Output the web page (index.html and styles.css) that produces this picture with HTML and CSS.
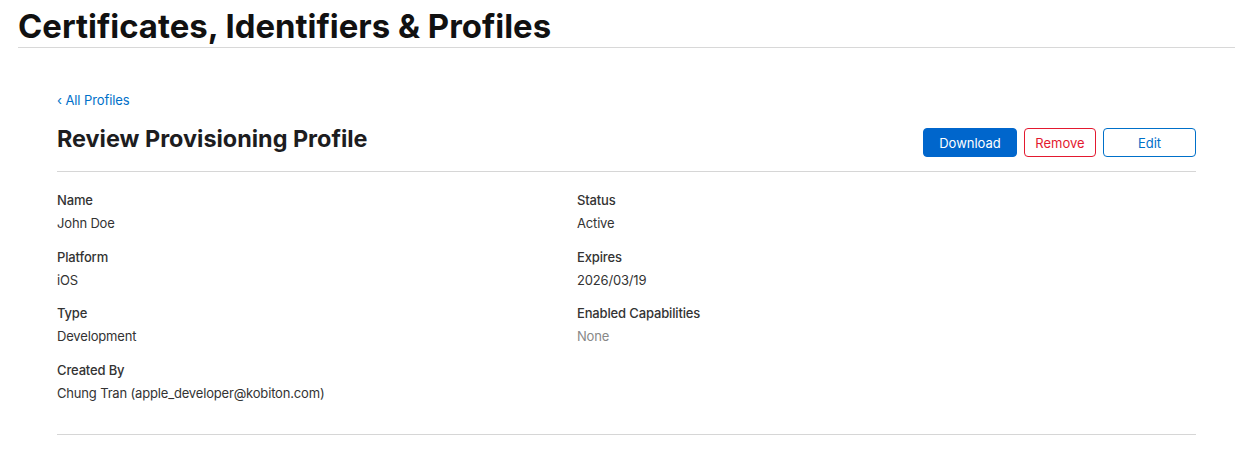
FILE: index.html
```html
<!DOCTYPE html>
<html lang="en">
<head>
<meta charset="utf-8">
<title>Certificates, Identifiers &amp; Profiles</title>
<link rel="stylesheet" href="styles.css">
</head>
<body>
<header class="site-header">
  <h1 class="site-title">Certificates, Identifiers &amp; Profiles</h1>
</header>
<main class="content">
  <a class="back-link" href="#">&#8249; All Profiles</a>
  <div class="page-head">
    <h2 class="page-title">Review Provisioning Profile</h2>
    <div class="actions">
      <button class="btn btn-primary">Download</button>
      <button class="btn btn-danger">Remove</button>
      <button class="btn btn-outline">Edit</button>
    </div>
  </div>
  <section class="details">
    <div class="col">
      <div class="field"><div class="label">Name</div><div class="value">John Doe</div></div>
      <div class="field"><div class="label">Platform</div><div class="value">iOS</div></div>
      <div class="field"><div class="label">Type</div><div class="value">Development</div></div>
      <div class="field"><div class="label">Created By</div><div class="value">Chung Tran (apple_developer@kobiton.com)</div></div>
    </div>
    <div class="col">
      <div class="field"><div class="label">Status</div><div class="value">Active</div></div>
      <div class="field"><div class="label">Expires</div><div class="value">2026/03/19</div></div>
      <div class="field"><div class="label">Enabled Capabilities</div><div class="value muted">None</div></div>
    </div>
  </section>
</main>
</body>
</html>
```

FILE: styles.css
```css
* { box-sizing: border-box; }
body {
  margin: 0;
  font-family: Inter, "Liberation Sans", sans-serif;
  color: #1d1d1f;
  background: #fff;
}
.site-header {
  margin-left: 18px;
  border-bottom: 1px solid #d8d8d8;
  height: 48px;
  padding-top: 6px;
}
.site-title {
  margin: 0;
  font-size: 32.9px;
  font-weight: 700;
  line-height: 40px;
  color: #111;
}
.content {
  width: 1139px;
  margin-left: 57px;
  padding-top: 43px;
}
.back-link {
  display: block;
  font-size: 13px;
  line-height: 18px;
  color: #0070c9;
  text-decoration: none;
  letter-spacing: -0.1px;
}
.page-head {
  display: flex;
  justify-content: space-between;
  align-items: flex-start;
  margin-top: 19px;
  padding-bottom: 14px;
  border-bottom: 1px solid #d6d6d6;
}
.page-title {
  margin: 0;
  font-size: 23.4px;
  font-weight: 700;
  line-height: 22px;
  color: #1d1d1f;
}
.actions {
  display: flex;
  gap: 7px;
}
.btn {
  height: 29px;
  border-radius: 4px;
  font-family: inherit;
  font-size: 13px;
  background: #fff;
  padding: 0;
  cursor: pointer;
}
.btn-primary {
  width: 94px;
  background: #0066cc;
  border: 1px solid #0066cc;
  color: #fff;
}
.btn-danger {
  width: 72px;
  border: 1px solid #e3192f;
  color: #e3192f;
}
.btn-outline {
  width: 93px;
  border: 1px solid #0070c9;
  color: #0070c9;
}
.details {
  display: grid;
  grid-template-columns: 520px 1fr;
  padding-top: 19px;
  padding-bottom: 32px;
  border-bottom: 1px solid #d6d6d6;
}
.field {
  display: flex;
  flex-direction: column;
  gap: 5px;
  margin-bottom: 15.6px;
}
.col .field:last-child { margin-bottom: 0; }
.label {
  font-size: 13px;
  font-weight: 500;
  line-height: 18px;
  color: #333;
  letter-spacing: -0.15px;
}
.value {
  font-size: 13px;
  line-height: 18px;
  color: #333;
  letter-spacing: -0.17px;
}
.value.muted { color: #888; }
```
